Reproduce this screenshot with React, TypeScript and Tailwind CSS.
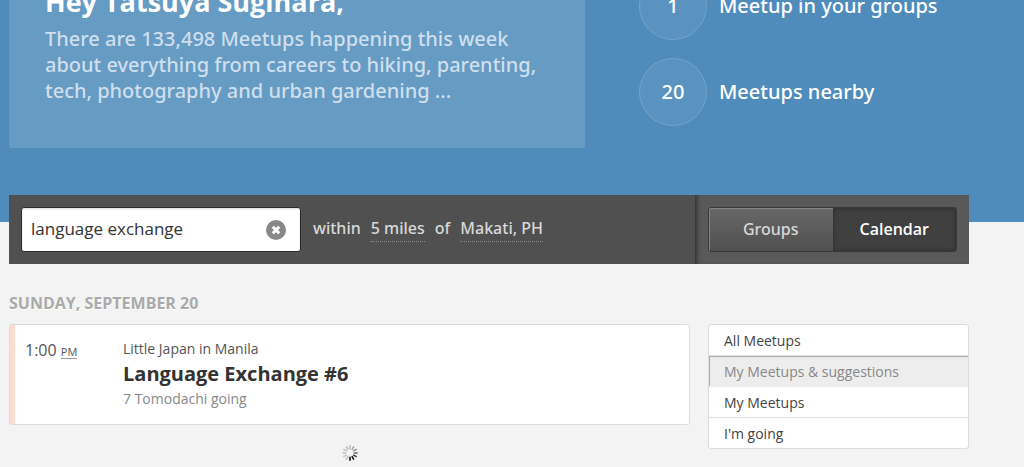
import { useState } from "react";
import clsx from "clsx";

const stats = [
  { id: 0, count: 1, label: "Meetup in your groups" },
  { id: 1, count: 20, label: "Meetups nearby" },
];

const views = ["Groups", "Calendar"];

const filters = [
  "All Meetups",
  "My Meetups & suggestions",
  "My Meetups",
  "I'm going",
];

const spokes = [
  "#b4b4b4",
  "#a2a2a2",
  "#8a8a8a",
  "#6a6a6a",
  "#383838",
  "#111111",
  "#000000",
  "#bababa",
  "#c4c4c4",
  "#c4c4c4",
  "#bebebe",
  "#bababa",
];

function Spinner() {
  return (
    <svg width="16" height="16" viewBox="0 0 16 16" role="img" aria-label="Loading">
      {spokes.map((color, i) => (
        <line
          key={i}
          x1="8"
          y1="0.3"
          x2="8"
          y2="4.3"
          stroke={color}
          strokeWidth="1.5"
          transform={`rotate(${i * 30} 8 8)`}
        />
      ))}
    </svg>
  );
}

export default function App() {
  const [query, setQuery] = useState("language exchange");
  const [view, setView] = useState("Calendar");
  const [filter, setFilter] = useState("My Meetups & suggestions");

  return (
    <div className="min-h-screen overflow-hidden bg-[#f3f3f3] font-['Open_Sans','Noto_Sans',sans-serif] text-[#333]">
      {/*hero*/}
      <div className="bg-[#4f8cbc] pb-[74px] pl-[9px]">
        <div className="-mt-7 flex max-w-[960px] gap-[54px]">
          <div className="w-3/5 rounded-b-[3px] bg-[#669bc4] px-9 pt-3 pb-11">
            <h1 className="text-[27px] leading-[36px] font-bold text-white">
              Hey Tatsuya Sugihara,
            </h1>
            <p className="mt-[6px] font-['Noto_Sans',sans-serif] text-[20px] leading-[26px] font-medium text-[#cfdfec]">
              There are 133,498 Meetups happening this week about everything
              from careers to hiking, parenting, tech, photography and urban
              gardening ...
            </p>
          </div>
          <ul className="flex flex-col gap-[18px] font-['Noto_Sans',sans-serif] text-[20px] font-medium text-white">
            {stats.map((item) => (
              <li key={item.id} className="flex items-center gap-3">
                <span className="flex size-[68px] items-center justify-center rounded-full border border-[#73a3ca] bg-[#5a93c0]">
                  {item.count}
                </span>
                {item.label}
              </li>
            ))}
          </ul>
        </div>
      </div>

      <div className="relative -mt-[27px] ml-[9px] max-w-[960px]">
        {/*search bar*/}
        <div className="flex bg-[#505050]">
          <form
            className="flex flex-1 items-center py-3 pl-3 text-[16px] text-[#d8d8d8]"
            onSubmit={(e) => e.preventDefault()}
          >
            <div className="mr-3 flex h-[45px] w-[280px] items-center rounded-[3px] border border-[#2b2b2b] bg-white pr-[14px] pl-[9px] shadow-[inset_0_1px_2px_rgba(0,0,0,0.15)]">
              <input
                type="text"
                aria-label="Search"
                value={query}
                onChange={(e) => setQuery(e.target.value)}
                className="min-w-0 flex-1 pb-[2px] text-[17px] text-[#333] outline-none"
              />
              <button
                type="button"
                aria-label="Clear search"
                onClick={() => setQuery("")}
                className="cursor-pointer"
              >
                <svg width="20" height="20" viewBox="0 0 20 20">
                  <circle cx="10" cy="10" r="10" fill="#888" />
                  <path
                    d="M6.8 6.8l6.4 6.4M13.2 6.8l-6.4 6.4"
                    stroke="#fff"
                    strokeWidth="3"
                  />
                </svg>
              </button>
            </div>
            <div className="flex gap-[10px] pb-[2px] font-['Noto_Sans',sans-serif] leading-[25px] font-medium">
              <span>within</span>
              <a href="#" className="border-b border-dotted border-[#888]">
                5 miles
              </a>
              <span>of</span>
              <a href="#" className="border-b border-dotted border-[#888]">
                Makati, PH
              </a>
            </div>
          </form>
          <div className="w-[274px] border-l border-[#3a3a3a] bg-[#595959] p-3 shadow-[inset_3px_0_3px_-1px_rgba(0,0,0,0.3)]">
            <div className="flex h-[45px] overflow-hidden rounded-[3px] border border-[#383838] text-[16px]">
              {views.map((item) => (
                <button
                  key={item}
                  type="button"
                  onClick={() => setView(item)}
                  className={clsx(
                    "flex-1 cursor-pointer pb-[2px]",
                    view === item
                      ? "bg-[#404040] font-semibold text-white shadow-[inset_0_0_5px_rgba(0,0,0,0.35)]"
                      : "bg-linear-to-b from-[#686868] to-[#505050] font-['Noto_Sans',sans-serif] font-medium text-[#d8d8d8] shadow-[inset_1px_1px_0_#858585]"
                  )}
                >
                  {item}
                </button>
              ))}
            </div>
          </div>
        </div>

        {/*results*/}
        <h2 className="mt-7 text-[16px] leading-[22px] font-bold text-[#aaa] uppercase [text-shadow:0_1px_0_#fff]">
          Sunday, September 20
        </h2>
        <div className="mt-[10px] flex items-start gap-[18px]">
          <div className="flex-1">
            <div className="flex rounded-[3px] border border-[#dcdcdc] bg-white">
              <div className="w-[5px] rounded-l-[2px] bg-[#ffdcd1]" />
              <div className="w-[108px] pt-[14px] pl-[10px] text-[16px] leading-[22px] text-[#555]">
                1:00{" "}
                <abbr className="inline-block border-b border-[#999] text-[11px] leading-[13px] no-underline">
                  PM
                </abbr>
              </div>
              <div className="pt-[14px] pb-[15px] text-[14px] leading-[20px]">
                <p className="text-[#555]">Little Japan in Manila</p>
                <h3 className="text-[20px] leading-[30px] font-bold">
                  Language Exchange #6
                </h3>
                <p className="text-[#888]">7 Tomodachi going</p>
              </div>
            </div>
            <div className="mt-5 flex justify-center">
              <Spinner />
            </div>
          </div>
          <ul className="w-[261px] rounded-[3px] border border-[#dcdcdc] bg-white text-[14px]">
            {filters.map((item) => (
              <li
                key={item}
                className={clsx(
                  "border-b last:border-b-0",
                  filter === item ? "border-[#ededed]" : "border-[#dfdfdf]"
                )}
              >
                <button
                  type="button"
                  onClick={() => setFilter(item)}
                  className={clsx(
                    "block h-[30px] w-full cursor-pointer px-[15px] text-left",
                    filter === item
                      ? "bg-[#ededed] text-[#888] shadow-[inset_1px_1px_1px_#aaa]"
                      : "text-[#444]"
                  )}
                >
                  {item}
                </button>
              </li>
            ))}
          </ul>
        </div>
      </div>
    </div>
  );
}
